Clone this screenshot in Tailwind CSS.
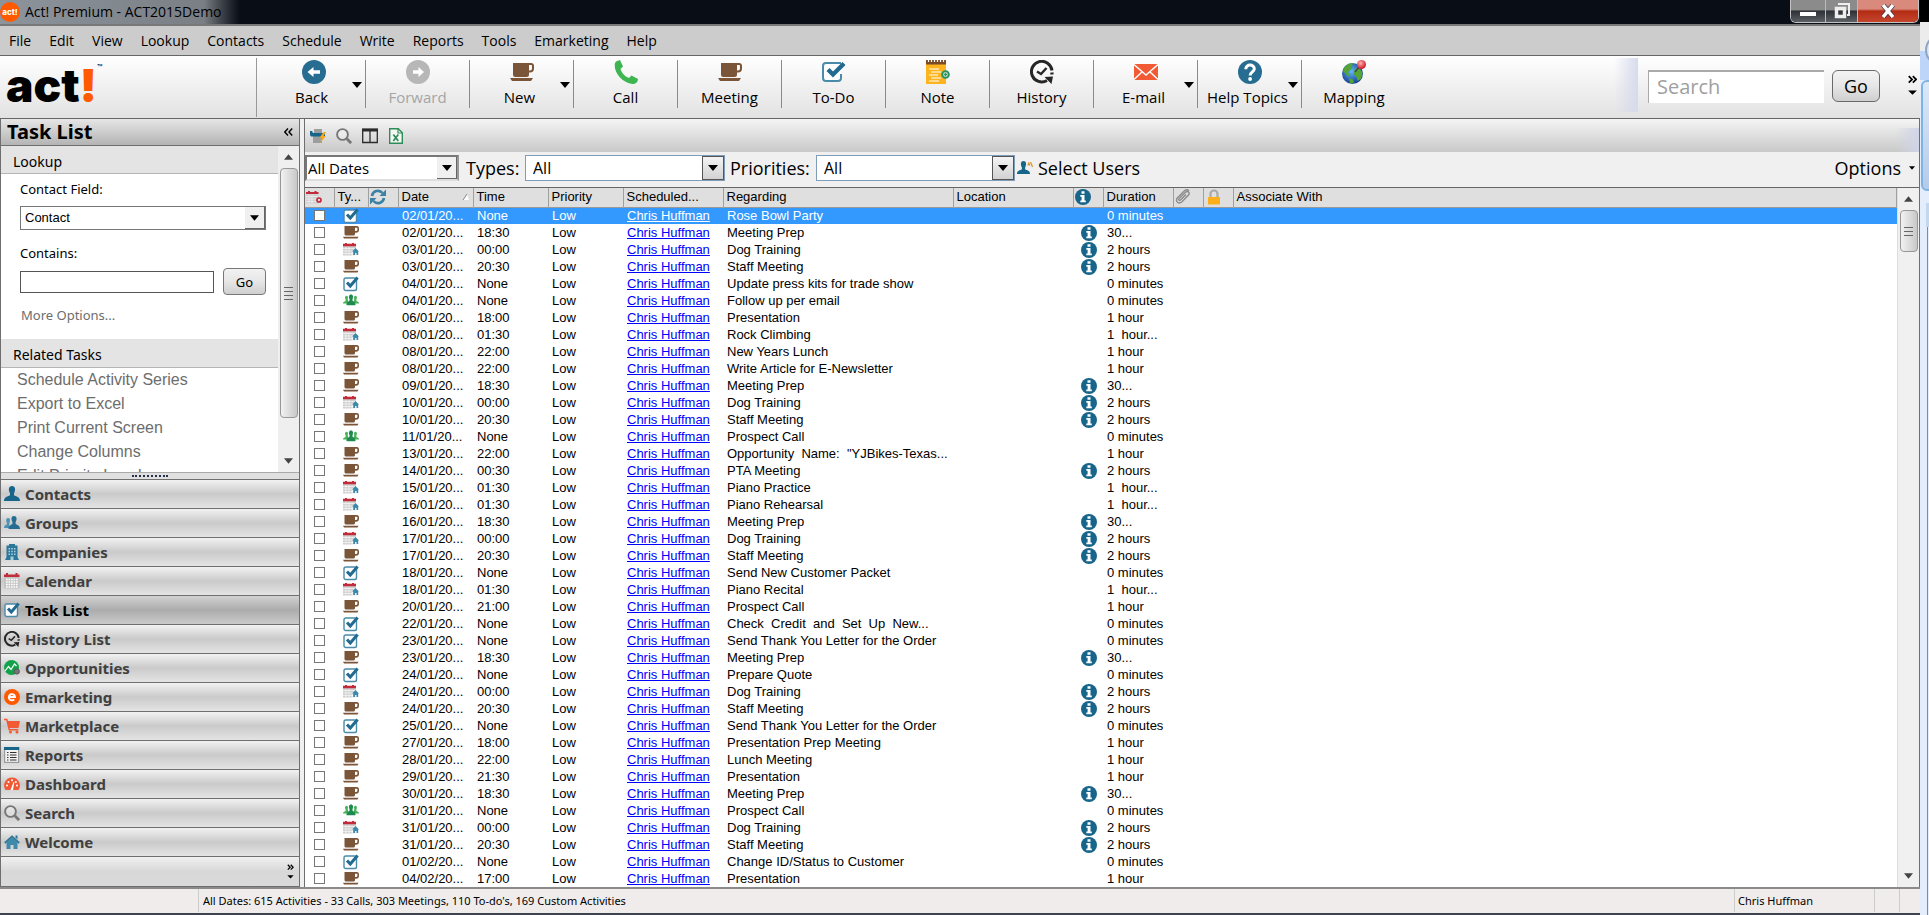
<!DOCTYPE html>
<html lang="en">
<head>
  <meta charset="UTF-8" />
  <meta name="viewport" content="width=device-width, initial-scale=1.0" />
  <title>Act! Premium - ACT2015Demo</title>
  <script src="https://cdn.jsdelivr.net/npm/@tailwindcss/browser@4"></script>
</head>
<body class="h-screen overflow-hidden flex bg-[#e3edfb] font-['Open_Sans','Noto_Sans',sans-serif] text-black">

  <!-- Icon sprite -->
  <svg class="absolute size-0" aria-hidden="true">
    <defs>
      <radialGradient id="sea" cx=".45" cy=".4" r=".6"><stop offset="0" stop-color="#63b4ff" /><stop offset="1" stop-color="#12418f" /></radialGradient>
      <radialGradient id="pin" cx=".4" cy=".35" r=".6"><stop offset="0" stop-color="#ffb3b3" /><stop offset="1" stop-color="#d21f2b" /></radialGradient>
    </defs>
    <symbol id="i-cup" viewBox="0 0 16 13">
      <path fill="#7b5538" d="M1.500 0h10.500v8a1.600 1.600 0 0 1-1.600 1.600H3.100A1.600 1.600 0 0 1 1.500 8zM0 10.800h15.500l-1 1.800H1z" />
      <path fill="none" stroke="#7b5538" stroke-width="1.600" d="M12 .9h2a1.200 1.200 0 0 1 1.200 1.200v1.600A2.200 2.200 0 0 1 13 5.900h-1" />
    </symbol>
    <symbol id="i-task" viewBox="0 0 16 16">
      <rect x="1" y="2" width="12.5" height="12.5" rx="1.8" fill="#fff" stroke="#4a8ba9" stroke-width="1.4" />
      <path fill="none" stroke="#236a90" stroke-width="3" d="M4 6.5l3.3 3.6L14.6 1.6" />
    </symbol>
    <symbol id="i-cal" viewBox="0 0 16 16">
      <rect y="4" width="15.500" height="11.500" fill="#c4c4c4" />
      <path stroke="#fff" stroke-width="1.300" d="M2 6.500h12M2 9h12M2 11.500h12M2 14h12" stroke-dasharray="1.700 .8" />
      <path fill="#c22b3a" d="M0 1.500h2V0h2v1.500h7.500V0h2v1.500h2V4H0z" />
    </symbol>
    <symbol id="i-calhome" viewBox="0 0 16 13">
      <rect y="3" width="13" height="9.500" fill="#cdcdcd" />
      <path stroke="#f4f4f4" stroke-width=".8" d="M0 5.500h12M0 8h12M0 10.500h12M3 4v8.500M6 4v8.500" />
      <path fill="#c22b3a" d="M0 .8h2V0h2v.8h5V0h2v.8h2V3.200H0z" />
      <path fill="#fff" d="M8.500 9l4-4.500L16 8v5H8.500z" opacity=".6" />
      <path fill="#3d89aa" d="M12.500 5L16 8.500h-.8V12h-1.700V10h-1.500v2h-1.800V8.500H9z" />
    </symbol>
    <symbol id="i-callog" viewBox="0 0 16 13">
      <rect y="3.500" width="12.500" height="9" fill="#cfcfcf" />
      <path stroke="#efefef" stroke-width=".8" d="M0 5.500h12M0 8h12M0 10.500h12M3 4v8.500M6 4v8.500" />
      <path fill="#c22b3a" d="M0 1h2V0h2v1h4.500V0h2v1h2v2H0z" />
      <circle cx="13" cy="9" r="2" fill="#e0e0e0" stroke="#c22b3a" stroke-width="1.700" />
    </symbol>
    <symbol id="i-people" viewBox="0 0 16 12">
      <path fill="#48b257" d="M3.500 1.200c1.500 0 1.800 1.600 1.200 3.200L5 6v3H0c0-1.600 1-2 2.600-2.600v-1.400C1.600 3.600 1.900 1.200 3.500 1.200zM12.500 1.200c-1.500 0-1.800 1.600-1.200 3.200L11 6v3h5c0-1.600-1-2-2.600-2.600v-1.400c1-1.400.7-3.800-.9-3.800z" />
      <path fill="#1d8a50" d="M8 0c2.200 0 2.500 2.400 1.500 4.700v1.500c1.700.9 3 1.300 3 4.500h-9c0-3.200 1.300-3.600 3-4.500V4.700C5.500 2.400 5.800 0 8 0z" />
    </symbol>
    <symbol id="i-info" viewBox="0 0 16 16">
      <circle cx="8" cy="8" r="8" fill="#17658a" />
      <path fill="#fff" d="M6.500 2.300h3v2.400h-3zM5.300 6h4.200v5.600h1.300v1.700H5.300v-1.700h1.300V7.700H5.300z" />
    </symbol>
    <symbol id="i-sync" viewBox="0 0 16 16">
      <path fill="none" stroke="#3a81a3" stroke-width="2.600" d="M2 7a6 6 0 0 1 10.500-3M14 9a6 6 0 0 1-10.500 3" />
      <path fill="#3a81a3" d="M16 .5V7h-6.500zM0 15.500V9h6.500z" />
    </symbol>
    <symbol id="i-clip" viewBox="0 0 16 16">
      <path fill="none" stroke="#8b8b8b" stroke-width="1.400" d="M11 5.500L5.500 11c-1.200 1-2.400-.2-1.400-1.400L10.500 3.300c2.300-2 5 .4 3 2.800L7 12.800C3.800 15.800-.3 12.300 2.500 8.800L9.500 1.800c1.200-1.100 3-1.400 4.500-.2" />
    </symbol>
    <symbol id="i-lock" viewBox="0 0 14 16">
      <path fill="none" stroke="#aaa" stroke-width="2.200" d="M3.500 9V5a3.500 3.500 0 0 1 7 0v4" />
      <rect x="1" y="8" width="12" height="7.500" rx=".6" fill="#fdae1b" />
    </symbol>
    <symbol id="i-person" viewBox="0 0 16 16">
      <path fill="#17658a" d="M8 0c3.600 0 3.800 4 2 7.200v2C12 10.500 16 10.500 16 15H0c0-4.500 4-4.500 6-5.800v-2C4.200 4 4.400 0 8 0z" />
    </symbol>
    <symbol id="i-group" viewBox="0 0 16 16">
      <path fill="#4a93b5" d="M4 3c2 0 2.500 2 1.500 4.500L5 13H0c0-2.500 1.500-3 3-3.700V8C1.800 6 2 3 4 3z" />
      <path fill="#236d92" d="M10 1c3 0 3.200 3.600 1.600 6v2C13.200 10 16 10 16 14H4.500c0-4 2.500-4 4-5V7C7 4.600 7 1 10 1z" />
    </symbol>
    <symbol id="i-building" viewBox="0 0 16 16">
      <path fill="#2b7798" d="M5 0h6v1.500h2.500V13l1.500 3H1L2.500 13V1.500H5z" />
      <path fill="#a9cede" d="M4.500 4h1.500v1.500H4.500zM7.200 4h1.600v1.500H7.200zM10 4h1.500v1.500H10zM4.500 6.700h1.500v1.500H4.500zM7.200 6.700h1.600v1.500H7.200zM10 6.700h1.500v1.500H10zM4.500 9.400h1.500v1.500H4.500zM7.200 9.400h1.600v1.500H7.200zM10 9.400h1.500v1.500H10zM6.500 12.500h3V16h-3z" />
    </symbol>
    <symbol id="i-history" viewBox="0 0 24 24">
      <path fill="none" stroke="#262626" stroke-width="3" d="M17 20.500A10.300 10.300 0 1 1 22 10.500" />
      <path fill="#262626" d="M14.500 17l8.500-.5L21.500 24zM20.500 12.500h3.300l-.4 2h-3.300z" />
      <path fill="none" stroke="#262626" stroke-width="2.400" d="M7 11.500l4 2.500 5.500-6" />
    </symbol>
    <symbol id="i-opp" viewBox="0 0 16 16">
      <circle cx="7.500" cy="7.500" r="7.500" fill="#12a24c" />
      <path fill="none" stroke="#fff" stroke-width="1.200" d="M1 11l3.500-4.500 2.500 3 3.500-5.500 2 2" />
      <circle cx="12.800" cy="11.500" r="2.600" fill="#777" stroke="#555" />
    </symbol>
    <symbol id="i-e" viewBox="0 0 16 16">
      <circle cx="8" cy="8" r="8" fill="#ff5a00" />
      <path fill="none" stroke="#fff" stroke-width="1.900" d="M5 8h6A3.100 3.100 0 1 0 10.200 10.300" />
    </symbol>
    <symbol id="i-cart" viewBox="0 0 16 16">
      <path fill="none" stroke="#f15a35" stroke-width="1.500" d="M0 1.500h2.800L5.300 11.800h9" />
      <path fill="#f15a35" d="M3.500 3H16l-1.500 7H5z" />
      <circle cx="6.500" cy="14" r="1.500" fill="#f15a35" /><circle cx="13" cy="14" r="1.500" fill="#f15a35" />
    </symbol>
    <symbol id="i-report" viewBox="0 0 16 16">
      <rect x=".6" y=".6" width="14" height="14.800" fill="#f2f2f2" stroke="#9a9a9a" stroke-width="1.200" />
      <path fill="#17658a" d="M0 0h15.200v3H0z" />
      <path stroke="#333" stroke-width="1.200" d="M3 5.500h1.500M6 5.500h6.500M3 8h1.500M6 8h6.500M3 10.500h1.500M6 10.500h6.500M3 13h1.500M6 13h6.500" />
    </symbol>
    <symbol id="i-gauge" viewBox="0 0 16 16">
      <path fill="#f15a35" d="M8 1.500a8 8 0 0 1 6.500 12.500h-13A8 8 0 0 1 8 1.500z" />
      <g fill="#fff"><circle cx="3" cy="9.500" r="1" /><circle cx="4.500" cy="6" r="1" /><circle cx="8" cy="4.200" r="1" /><circle cx="13" cy="9.500" r="1" /><circle cx="11.800" cy="6" r="1" /><path d="M9.500 6l.8.300L9 14H6.500z" /></g>
    </symbol>
    <symbol id="i-search" viewBox="0 0 16 16">
      <circle cx="6.500" cy="6.500" r="5.400" fill="#fff" fill-opacity=".35" stroke="#767676" stroke-width="1.900" />
      <path stroke="#767676" stroke-width="2.800" d="M10.800 10.800l4.300 4.300" />
    </symbol>
    <symbol id="i-home" viewBox="0 0 16 16">
      <path fill="#3f8aab" d="M8 3.500l5.500 5V15h-4v-4h-3v4h-4V8.500z" />
      <path fill="none" stroke="#2b7798" stroke-width="1.700" d="M.8 9L8 2.400 15.200 9" />
      <path fill="#2b7798" d="M11.500 1.500h2v4l-2-2z" />
    </symbol>
    <symbol id="i-back" viewBox="0 0 24 24">
      <circle cx="12" cy="12" r="12" fill="#276c91" />
      <path fill="#fff" d="M5.500 12l6-5v3.300h6.500v3.400h-6.500V17z" />
    </symbol>
    <symbol id="i-forward" viewBox="0 0 24 24">
      <circle cx="12" cy="12" r="12" fill="#b7b7b7" />
      <path fill="#fff" d="M18 12l-5.500-5v3.300H7v3.400h5.500V17z" />
    </symbol>
    <symbol id="i-cuplg" viewBox="0 0 24 24">
      <path fill="#7b5538" d="M3 3h16v11.500a2.500 2.500 0 0 1-2.500 2.500h-11A2.500 2.500 0 0 1 3 14.500zM0 18h23l-2 3H2z" />
      <path fill="none" stroke="#7b5538" stroke-width="2" d="M18 4h3a2 2 0 0 1 2 2v2.500a3 3 0 0 1-3 3h-2" />
    </symbol>
    <symbol id="i-phone" viewBox="0 0 24 24">
      <path fill="#3fb552" d="M2 1.500L6 0l3 6.500L6.500 9c1 4 4 7.200 8.500 9l2.500-2.600L24 19c0 3-2.500 5-5.500 5C8 23-1 12 1 3z" />
    </symbol>
    <symbol id="i-tasklg" viewBox="0 0 24 24">
      <path fill="#fff" stroke="#4a8ba9" stroke-width="2" d="M19 3H4a3 3 0 0 0-3 3v12a3 3 0 0 0 3 3h12a3 3 0 0 0 3-3v-4" />
      <path fill="none" stroke="#236a90" stroke-width="4.400" d="M6 9.500l5 5L22 3.500" />
    </symbol>
    <symbol id="i-note" viewBox="0 0 24 24">
      <rect y="0" width="20" height="24" fill="#feb41f" />
      <path fill="#7b4a26" d="M0 0h20v4.500H0z" />
      <path stroke="#fff" stroke-width="1.200" d="M2.500 0v2M5.500 0v2M8.500 0v2M11.500 0v2M14.500 0v2M17.500 0v2M3 9h10M5 12h10M3 15h9M5 18h10M3 21h10" />
      <circle cx="19.500" cy="14.500" r="3.300" fill="#fff" stroke="#27925c" stroke-width="2" />
      <path stroke="#27925c" stroke-width="1.300" d="M19.500 12.700v3.600M17.700 14.500h3.600" />
    </symbol>
    <symbol id="i-mail" viewBox="0 0 24 24">
      <rect y="4" width="24" height="16" fill="#f15a35" />
      <path fill="none" stroke="#fff" stroke-width="1.400" d="M0 4.500l12 10.500L24 4.500M0 19.500l8.500-8M24 19.500l-8.500-8" />
    </symbol>
    <symbol id="i-help" viewBox="0 0 24 24">
      <circle cx="12" cy="12" r="12" fill="#276c91" />
      <path fill="none" stroke="#fff" stroke-width="3" d="M7.800 9.200C7.800 3.500 16.500 4 16.300 9c-.2 2.800-4 3.200-4.200 6.500" />
      <circle cx="12.100" cy="19" r="1.900" fill="#fff" />
    </symbol>
    <symbol id="i-globe" viewBox="0 0 24 24">
      <circle cx="10.500" cy="13.500" r="10.500" fill="url(#sea)" />
      <path fill="#54a437" d="M2.500 7c3-3.500 7-4.500 9-3.500L9 6.500l1 2-4 3.500 1.500 3L6 17l-3-4-2-1zM13 8l5 1 2.500 4-1.500 6-3.500 2-1-4-3-3zM7 18l4 1.500 1 4-4-.5z" />
      <path stroke="#444" stroke-width="1.400" d="M13 12l5-6" />
      <circle cx="19.500" cy="4.500" r="4.500" fill="url(#pin)" />
    </symbol>
    <symbol id="i-print" viewBox="0 0 16 16">
      <path fill="#9d9d9d" d="M4 1h8v5H4zM3 8h9v7H3z" />
      <path fill="#17658a" d="M0 3h2l1 2h12v3.500H1L0 7z" />
      <path fill="#f7a81b" d="M13.500 4L9.500 10h2.500l-2 5 6-7h-2.500L16 4z" />
    </symbol>
    <symbol id="i-columns" viewBox="0 0 16 16">
      <path fill="none" stroke="#2b2b2b" stroke-width="1.300" d="M.7 1.500h14.600v13H.7zM8 2v12.500" />
      <path fill="#2b2b2b" d="M0 .5h16v3H0z" />
    </symbol>
    <symbol id="i-excel" viewBox="0 0 16 16">
      <path fill="#f3f8f4" stroke="#2e8b57" stroke-width="1.400" d="M1.700.7h8.600l4 4v10.600H1.700z" />
      <path fill="none" stroke="#2e8b57" stroke-width="1.200" d="M10 .7V5h4.300" />
      <path stroke="#2e8b57" stroke-width="1.700" d="M5.300 6.500l5 6.500M10.300 6.500l-5 6.500" />
    </symbol>
    <symbol id="i-users" viewBox="0 0 16 14">
      <path fill="#17658a" d="M6.500 0c3 0 3.200 3.600 1.600 6.500v1.800C10 9.500 13 9.300 13 13H0c0-3.700 3-3.500 4.900-4.700V6.500C3.300 3.600 3.500 0 6.500 0z" />
      <path fill="none" stroke="#d8952f" stroke-width="1.200" d="M10.800 4.500l1-2.500 1.200 2.500M13 1.500l1 .5 1.500 4" />
    </symbol>
    <symbol id="i-down" viewBox="0 0 10 6"><path d="M0 0h10L5 6z" /></symbol>
    <symbol id="i-up" viewBox="0 0 10 6"><path d="M5 0l5 6H0z" /></symbol>
    <symbol id="i-more" viewBox="0 0 8 20">
      <path fill="none" stroke="#000" stroke-width="1.600" d="M.6 1l3 3-3 3M4.300 1l3 3-3 3" />
      <path d="M0 14h8l-4 4z" />
    </symbol>
  </svg>

  <div class="flex-1 min-w-0 flex flex-col">

    <!-- Title bar -->
    <header class="h-[26px] shrink-0 flex items-start bg-[#090d15] border-b-2 border-[#777] overflow-hidden">
      <div class="h-6 w-60 flex items-center gap-[5px] bg-linear-to-r from-[#8d949c] via-[#7a7f85] via-85% to-[#090d15]">
        <svg class="size-5" viewBox="0 0 20 20"><circle cx="10" cy="10" r="10" fill="#ff5a00" /><text x="10" y="13" font-family="Inter" font-size="8" font-weight="800" fill="#fff" text-anchor="middle">act!</text></svg>
        <h1 class="text-sm whitespace-nowrap">Act! Premium - ACT2015Demo</h1>
      </div>
      <div class="ml-auto mr-px h-[23px] flex border border-t-0 border-[#c3c3c3] rounded-b-md overflow-hidden">
        <button aria-label="Minimize" class="w-[35px] flex items-end justify-center pb-[6px] bg-linear-to-b from-[#8b8b8b] from-45% via-[#2d3035] via-50% to-[#5d6064] border-r border-[#bbb]"><span class="w-4 h-1 bg-white"></span></button>
        <button aria-label="Restore" class="w-8 flex items-center justify-center bg-linear-to-b from-[#8b8b8b] from-45% via-[#2d3035] via-50% to-[#5d6064] border-r border-[#bbb]">
          <svg class="size-4" viewBox="0 0 16 16"><path fill="none" stroke="#eee" stroke-width="2" d="M5 2V1h10v11h-2" /><path fill="none" stroke="#eee" stroke-width="3.500" d="M2.500 5.500h8v8h-8z" /></svg>
        </button>
        <button aria-label="Close" class="w-[60px] flex items-center justify-center bg-linear-to-b from-[#d98a7d] from-40% via-[#b42a12] via-50% to-[#c4452c]">
          <svg class="w-4 h-[14px]" viewBox="0 0 16 14"><path stroke="#4a3a48" stroke-width="5" d="M3 1l10 12M13 1L3 13" /><path stroke="#fff" stroke-width="3.400" d="M3 1l10 12M13 1L3 13" /></svg>
        </button>
      </div>
    </header>

    <!-- Menu -->
    <nav class="h-[30px] shrink-0 flex items-center gap-[18px] pl-[9px] bg-[#ccc] border-b border-[#666] text-sm">
      <a href="#">File</a>
      <a href="#">Edit</a>
      <a href="#">View</a>
      <a href="#">Lookup</a>
      <a href="#">Contacts</a>
      <a href="#">Schedule</a>
      <a href="#">Write</a>
      <a href="#">Reports</a>
      <a href="#">Tools</a>
      <a href="#">Emarketing</a>
      <a href="#">Help</a>
    </nav>

    <!-- Toolbar -->
    <div class="h-[63px] shrink-0 flex items-start pt-[2px] bg-linear-to-b from-white to-[#e2e2e2] border-b border-[#666]">
      <div class="w-64 h-[59px] shrink-0 flex items-start pl-[6px] font-['Inter',sans-serif] font-black text-[46px] leading-[54px]">
        <span>act</span><span class="text-[#ff5a00]">!</span><span class="text-[9px] leading-[20px] font-normal">™</span>
      </div>
      <div id="toolbar" class="flex items-start pl-[5px] pt-[2px] h-[59px] border-l border-[#999]"></div>
      <div class="ml-auto flex items-start">
        <div class="w-6 h-[54px] mr-[10px] bg-linear-to-r from-transparent to-[#d6dbec]"></div>
        <input aria-label="Search" placeholder="Search" class="mt-3 w-[176px] h-[33px] pl-2 pb-[2px] bg-white border-t-2 border-l border-[#aaa] text-xl placeholder:text-[#a0a0a0]" />
        <button class="mt-3 ml-2 w-12 h-8 rounded-md border border-[#6a6a6a] bg-linear-to-b from-[#f4f4f4] via-[#e6e6e6] via-50% to-[#cfcfcf] text-lg leading-none">Go</button>
        <button aria-label="More tools" class="mt-[17px] ml-7 mr-[3px]"><svg class="w-[9px] h-[22px]"><use href="#i-more" /></svg></button>
      </div>
    </div>

    <!-- Body -->
    <div class="flex-1 min-h-0 flex gap-1 bg-[#f0f0f0] border-b-2 border-[#8a8a8a]">

      <!-- Sidebar -->
      <aside class="w-[300px] shrink-0 flex flex-col border border-t-0 border-[#6f6f6f] bg-white font-['Noto_Sans',sans-serif]">
        <div class="h-[27px] shrink-0 flex items-center justify-between pl-[6px] pr-[6px] bg-linear-to-b from-[#e6e6e6] to-[#b4b4b4] border-b border-[#6f6f6f]">
          <h2 class="text-xl font-bold">Task List</h2>
          <button aria-label="Collapse"><svg class="w-[9px] h-2" viewBox="0 0 9 8"><path fill="none" stroke="#000" stroke-width="1.400" d="M4 .5L.8 4 4 7.500M8.200 .5L5 4l3.200 3.500" /></svg></button>
        </div>
        <div class="flex-1 min-h-0 flex">
          <div class="flex-1 overflow-hidden">
            <h3 class="h-7 flex items-center pt-1 pl-3 bg-[#e4e4e4] border-b border-[#b5b5b5] text-sm">Lookup</h3>
            <form class="h-[165px] pl-[19px] text-[13px] leading-[18px]">
              <label for="field" class="block pt-[6px]">Contact Field:</label>
              <div class="relative mt-2 w-[246px] h-6">
                <select id="field" class="appearance-none w-full h-full pl-1 bg-white border border-[#777] font-['Liberation_Sans',sans-serif]"><option>Contact</option></select>
                <span class="pointer-events-none absolute right-px top-px h-[22px] w-5 flex items-center justify-center bg-[#f0f0f0] border-r border-b border-[#666]"><svg class="w-[9px] h-[6px]"><use href="#i-down" /></svg></span>
              </div>
              <label for="contains" class="block mt-[14px]">Contains:</label>
              <div class="mt-[6px] flex items-center gap-[9px]">
                <input id="contains" class="w-[194px] h-[22px] px-1 bg-white border border-[#555]" />
                <button type="button" class="w-[43px] h-[27px] rounded-sm border border-[#777] bg-linear-to-b from-[#f2f2f2] via-[#e6e6e6] via-50% to-[#cfcfcf]">Go</button>
              </div>
              <a href="#" class="block mt-[11px] pl-px text-[#6d6d6d]">More Options...</a>
            </form>
            <h3 class="h-[29px] flex items-center pt-1 pl-3 bg-[#e4e4e4] border-b border-[#b5b5b5] text-sm">Related Tasks</h3>
            <div class="flex flex-col pl-4 font-['Liberation_Sans',sans-serif] text-base leading-6 text-[#6d6d6d]">
              <a href="#">Schedule Activity Series</a>
              <a href="#">Export to Excel</a>
              <a href="#">Print Current Screen</a>
              <a href="#">Change Columns</a>
              <a href="#">Edit Priority Levels</a>
            </div>
          </div>
          <div class="w-[21px] shrink-0 flex flex-col items-center bg-[#efefef]">
            <svg class="w-[9px] h-[6px] my-2"><use href="#i-up" fill="#444" /></svg>
            <div class="w-[18px] h-[250px] flex flex-col items-center justify-center gap-[3px] rounded-sm border border-[#979797] bg-linear-to-r from-[#f2f2f2] to-[#c8c8c8]">
              <span class="w-[9px] h-px bg-[#666]"></span><span class="w-[9px] h-px bg-[#666]"></span><span class="w-[9px] h-px bg-[#666]"></span><span class="w-[9px] h-px bg-[#666]"></span>
            </div>
            <svg class="w-[9px] h-[6px] mt-auto mb-2"><use href="#i-down" fill="#444" /></svg>
          </div>
        </div>
        <div class="h-2 shrink-0 flex items-center justify-center bg-[#e0e0e0] border-y border-t-[#aaa] border-b-[#6f6f6f]"><span class="w-9 border-t-2 border-dotted border-[#26304a]"></span></div>
        <nav id="nav" class="shrink-0 flex flex-col"></nav>
        <div class="h-[29px] shrink-0 flex items-center justify-end pr-[5px] bg-linear-to-b from-[#f0f0f0] from-0% via-[#d8d8d8] via-50% to-[#dadada]">
          <button aria-label="More views"><svg class="w-[7px] h-4"><use href="#i-more" /></svg></button>
        </div>
      </aside>

      <!-- Task list -->
      <main class="flex-1 min-w-0 flex flex-col border-x border-[#6f6f6f]">
        <div class="h-[33px] shrink-0 flex items-center gap-[10px] pl-[5px] bg-linear-to-b from-[#f5f5f5] to-[#c9c9c9]">
          <button aria-label="Print"><svg class="size-4"><use href="#i-print" /></svg></button>
          <button aria-label="Find"><svg class="size-4"><use href="#i-search" /></svg></button>
          <button aria-label="Columns"><svg class="size-4"><use href="#i-columns" /></svg></button>
          <button aria-label="Export to Excel"><svg class="size-4"><use href="#i-excel" /></svg></button>
          <div class="ml-auto self-end w-6 h-6 bg-linear-to-r from-transparent to-[#d0d4e6]"></div>
        </div>

        <div class="h-[35px] shrink-0 flex items-center text-lg leading-none pb-[3px]">
          <div class="relative w-[154px] h-[26px]">
            <select aria-label="Dates" class="appearance-none w-full h-full pl-px bg-white border-2 border-[#777] border-r-[#999] border-b-[#ddd] text-[15px] leading-none"><option>All Dates</option></select>
            <span class="pointer-events-none absolute right-[2px] top-[2px] h-[22px] w-5 flex items-center justify-center bg-[#f0f0f0] border-r border-b border-[#666]"><svg class="w-[10px] h-[6px]"><use href="#i-down" /></svg></span>
          </div>
          <label for="types" class="pl-[7px] w-[66px]">Types:</label>
          <div class="relative w-[200px] h-[26px]">
            <select id="types" class="appearance-none w-full h-full pl-[7px] bg-white border border-[#7f9db9] text-base leading-none"><option>All</option></select>
            <span class="pointer-events-none absolute right-px top-px h-6 w-[22px] flex items-center justify-center bg-linear-to-b from-[#f4f4f4] to-[#d2d2d2] border border-[#555]"><svg class="w-[10px] h-[6px]"><use href="#i-down" /></svg></span>
          </div>
          <label for="priorities" class="pl-[5px] w-[91px]">Priorities:</label>
          <div class="relative w-[199px] h-[26px]">
            <select id="priorities" class="appearance-none w-full h-full pl-[7px] bg-white border border-[#7f9db9] text-base leading-none"><option>All</option></select>
            <span class="pointer-events-none absolute right-px top-px h-6 w-[22px] flex items-center justify-center bg-linear-to-b from-[#f4f4f4] to-[#d2d2d2] border border-[#555]"><svg class="w-[10px] h-[6px]"><use href="#i-down" /></svg></span>
          </div>
          <button class="flex items-center gap-[5px] pl-[2px]"><svg class="w-4 h-[14px]"><use href="#i-users" /></svg>Select Users</button>
          <button class="ml-auto mr-1 flex items-center gap-2">Options <svg class="w-[6px] h-1"><use href="#i-down" /></svg></button>
        </div>

        <div class="flex-1 min-h-0 flex border-t border-[#666] bg-white">
          <div class="flex-1 min-w-0 overflow-hidden">
            <table class="table-fixed w-full border-collapse font-['Liberation_Sans',sans-serif] text-[13px] leading-4">
              <colgroup>
                <col class="w-[29px]" /><col class="w-[34px]" /><col class="w-[30px]" /><col class="w-[75px]" /><col class="w-[75px]" />
                <col class="w-[75px]" /><col class="w-[100px]" /><col class="w-[230px]" /><col class="w-[120px]" /><col class="w-[30px]" />
                <col class="w-[70px]" /><col class="w-[30px]" /><col class="w-[30px]" /><col />
              </colgroup>
              <thead>
                <tr class="h-[19px] bg-[#dfdfdf] text-left border-b border-[#999] [&>th]:font-normal [&>th]:p-0 [&>th]:pl-[3px] [&>th]:whitespace-nowrap [&>th]:border-r [&>th]:border-[#a0a0a0]">
                  <th><svg class="w-4 h-[13px] -ml-[2px]" role="img" aria-label="Cleared"><use href="#i-callog" /></svg></th>
                  <th>Ty...</th>
                  <th><svg class="size-4 -ml-[2px]" role="img" aria-label="Recurring"><use href="#i-sync" /></svg></th>
                  <th><div class="flex items-center justify-between pr-[3px]">Date <svg class="size-2" viewBox="0 0 8 8"><path fill="#fff" d="M5 1L1 7h6z" /><path fill="none" stroke="#888" d="M1 7l4-6" /></svg></div></th>
                  <th>Time</th>
                  <th>Priority</th>
                  <th>Scheduled...</th>
                  <th>Regarding</th>
                  <th>Location</th>
                  <th><svg class="size-4 -ml-[2px]" role="img" aria-label="Details"><use href="#i-info" /></svg></th>
                  <th>Duration</th>
                  <th><svg class="size-4 -ml-[2px]" role="img" aria-label="Attachment"><use href="#i-clip" /></svg></th>
                  <th><svg class="w-[14px] h-4" role="img" aria-label="Private"><use href="#i-lock" /></svg></th>
                  <th>Associate With</th>
                </tr>
              </thead>
              <tbody id="tasks"></tbody>
            </table>
          </div>
          <div class="w-[22px] shrink-0 flex flex-col items-center bg-[#f0f0f0] border-l border-[#ddd]">
            <svg class="w-[9px] h-[6px] my-2"><use href="#i-up" fill="#444" /></svg>
            <div class="w-[18px] h-[42px] flex flex-col items-center justify-center gap-[3px] rounded-sm border border-[#979797] bg-linear-to-r from-[#f2f2f2] to-[#c8c8c8]">
              <span class="w-[9px] h-px bg-[#666]"></span><span class="w-[9px] h-px bg-[#666]"></span><span class="w-[9px] h-px bg-[#666]"></span>
            </div>
            <svg class="w-[9px] h-[6px] mt-auto mb-2"><use href="#i-down" fill="#444" /></svg>
          </div>
        </div>
      </main>
    </div>

    <!-- Status bar -->
    <footer class="h-[26px] shrink-0 flex items-stretch pb-px bg-[#f0ecec] border-b-2 border-[#3d444f] font-['Noto_Sans',sans-serif] text-[11px] leading-6 whitespace-nowrap">
      <div class="w-[199px] border-r border-[#ccc]"></div>
      <div class="flex-1 pl-1">All Dates: 615 Activities - 33 Calls, 303 Meetings, 110 To-do's, 169 Custom Activities</div>
      <div class="w-[140px] pl-[3px] border-l border-[#ccc]">Chris Huffman</div>
      <div class="w-[25px] border-l border-[#ccc]"></div>
      <div class="w-[21px] border-l border-[#ccc]"></div>
    </footer>
  </div>

  <!-- Edge of the window behind -->
  <div class="w-[9px] shrink-0 flex flex-col overflow-hidden">
    <div class="h-[22px] bg-black"></div>
    <div class="h-[58px] bg-linear-to-b from-[#ececec] from-50% to-[#bcd5f8] to-50%"><div class="mt-3 ml-[5px] size-8 rounded-full border-2 border-[#8ea6c4] bg-[#dfe8f3]"></div></div>
    <div class="h-[111px] ml-px w-4 rounded-md border-2 border-[#7fb4e0] bg-linear-to-b from-[#dbe8f8] to-[#b4cbe9]"></div>
    <div class="mt-3 ml-[6px] h-6 bg-[#c3d7ee]"></div>
    <div class="flex-1 mr-px border-r border-[#6a8fc0]"></div>
  </div>

  <script>
  const tools = [
    ["back", "Back", true], ["forward", "Forward"], ["cuplg", "New", true], ["phone", "Call"],
    ["cuplg", "Meeting"], ["tasklg", "To-Do"], ["note", "Note"], ["history", "History"],
    ["mail", "E-mail", true], ["help", "Help Topics", true], ["globe", "Mapping"]
  ];

  document.getElementById("toolbar").innerHTML = tools.map(([icon, label, menu], i) => `
    <button class="relative w-[104px] h-12 flex flex-col items-center text-[15px] leading-[26px] whitespace-nowrap ${i < tools.length - 1 ? "border-r border-[#8a8a8a]" : ""} ${label === "Forward" ? "text-[#a5a5a5]" : ""}">
      <svg class="size-6 shrink-0"><use href="#i-${icon}" /></svg>
      <span class="${menu ? "pr-1" : ""}">${label}</span>
      ${menu ? `<svg class="absolute right-[3px] top-[22px] w-[10px] h-[6px]"><use href="#i-down" /></svg>` : ""}
    </button>`).join("");

  const views = [
    ["person", "Contacts"], ["group", "Groups"], ["building", "Companies"], ["cal", "Calendar"],
    ["task", "Task List"], ["history", "History List"], ["opp", "Opportunities"], ["e", "Emarketing"],
    ["cart", "Marketplace"], ["report", "Reports"], ["gauge", "Dashboard"], ["search", "Search"], ["home", "Welcome"]
  ];

  document.getElementById("nav").innerHTML = views.map(([icon, label]) => `
    <a href="#" class="h-[29px] flex items-center gap-[5px] pl-[3px] border-b border-[#6f6f6f] text-[15px] font-bold bg-linear-to-b ${label === "Task List" ? "text-black from-[#d2d2d2] via-[#acacac] via-50% to-[#cacaca]" : "text-[#404040] from-[#f2f2f2] via-[#cacaca] via-50% to-[#e4e4e4]"}">
      <svg class="size-4"><use href="#i-${icon}" /></svg>${label}
    </a>`).join("");

  // type, date, time, regarding, duration, has details
  const tasks = [
    ["task", "02/01/20", "None", "Rose Bowl Party", "0 minutes"],
    ["cup", "02/01/20", "18:30", "Meeting Prep", "30...", 1],
    ["calhome", "03/01/20", "00:00", "Dog Training", "2 hours", 1],
    ["cup", "03/01/20", "20:30", "Staff Meeting", "2 hours", 1],
    ["task", "04/01/20", "None", "Update press kits for trade show", "0 minutes"],
    ["people", "04/01/20", "None", "Follow up per email", "0 minutes"],
    ["cup", "06/01/20", "18:00", "Presentation", "1 hour"],
    ["calhome", "08/01/20", "01:30", "Rock Climbing", "1  hour..."],
    ["cup", "08/01/20", "22:00", "New Years Lunch", "1 hour"],
    ["cup", "08/01/20", "22:00", "Write Article for E-Newsletter", "1 hour"],
    ["cup", "09/01/20", "18:30", "Meeting Prep", "30...", 1],
    ["calhome", "10/01/20", "00:00", "Dog Training", "2 hours", 1],
    ["cup", "10/01/20", "20:30", "Staff Meeting", "2 hours", 1],
    ["people", "11/01/20", "None", "Prospect Call", "0 minutes"],
    ["cup", "13/01/20", "22:00", "Opportunity  Name:  \"YJBikes-Texas...", "1 hour"],
    ["cup", "14/01/20", "00:30", "PTA Meeting", "2 hours", 1],
    ["calhome", "15/01/20", "01:30", "Piano Practice", "1  hour..."],
    ["calhome", "16/01/20", "01:30", "Piano Rehearsal", "1  hour..."],
    ["cup", "16/01/20", "18:30", "Meeting Prep", "30...", 1],
    ["calhome", "17/01/20", "00:00", "Dog Training", "2 hours", 1],
    ["cup", "17/01/20", "20:30", "Staff Meeting", "2 hours", 1],
    ["task", "18/01/20", "None", "Send New Customer Packet", "0 minutes"],
    ["calhome", "18/01/20", "01:30", "Piano Recital", "1  hour..."],
    ["cup", "20/01/20", "21:00", "Prospect Call", "1 hour"],
    ["task", "22/01/20", "None", "Check  Credit  and  Set  Up  New...", "0 minutes"],
    ["task", "23/01/20", "None", "Send Thank You Letter for the Order", "0 minutes"],
    ["cup", "23/01/20", "18:30", "Meeting Prep", "30...", 1],
    ["task", "24/01/20", "None", "Prepare Quote", "0 minutes"],
    ["calhome", "24/01/20", "00:00", "Dog Training", "2 hours", 1],
    ["cup", "24/01/20", "20:30", "Staff Meeting", "2 hours", 1],
    ["task", "25/01/20", "None", "Send Thank You Letter for the Order", "0 minutes"],
    ["cup", "27/01/20", "18:00", "Presentation Prep Meeting", "1 hour"],
    ["cup", "28/01/20", "22:00", "Lunch Meeting", "1 hour"],
    ["cup", "29/01/20", "21:30", "Presentation", "1 hour"],
    ["cup", "30/01/20", "18:30", "Meeting Prep", "30...", 1],
    ["people", "31/01/20", "None", "Prospect Call", "0 minutes"],
    ["calhome", "31/01/20", "00:00", "Dog Training", "2 hours", 1],
    ["cup", "31/01/20", "20:30", "Staff Meeting", "2 hours", 1],
    ["task", "01/02/20", "None", "Change ID/Status to Customer", "0 minutes"],
    ["cup", "04/02/20", "17:00", "Presentation", "1 hour"]
  ];

  document.getElementById("tasks").innerHTML = tasks.map(([type, date, time, regarding, duration, details], i) => `
    <tr class="h-[17px] ${i === 0 ? "bg-[#3399ff] text-white" : ""} [&>td]:p-0 [&>td]:pl-1 [&>td]:whitespace-pre">
      <td><input type="checkbox" aria-label="Clear ${regarding.replace(/"/g, "")}" class="appearance-none block ml-[5px] size-[11px] bg-white border border-[#777]" /></td>
      <td><svg class="block ml-[5px] w-4 ${type === "task" ? "h-4" : "h-[13px]"}"><use href="#i-${type}" /></svg></td>
      <td></td>
      <td>${date}...</td>
      <td>${time}</td>
      <td>Low</td>
      <td><a href="#" class="underline ${i === 0 ? "text-white" : "text-[#0000ff]"}">Chris Huffman</a></td>
      <td>${regarding}</td>
      <td></td>
      <td>${details ? `<svg class="block ml-1 size-4" role="img" aria-label="Details"><use href="#i-info" /></svg>` : ""}</td>
      <td>${duration}</td>
      <td></td>
      <td></td>
      <td></td>
    </tr>`).join("");
  </script>
</body>
</html>
